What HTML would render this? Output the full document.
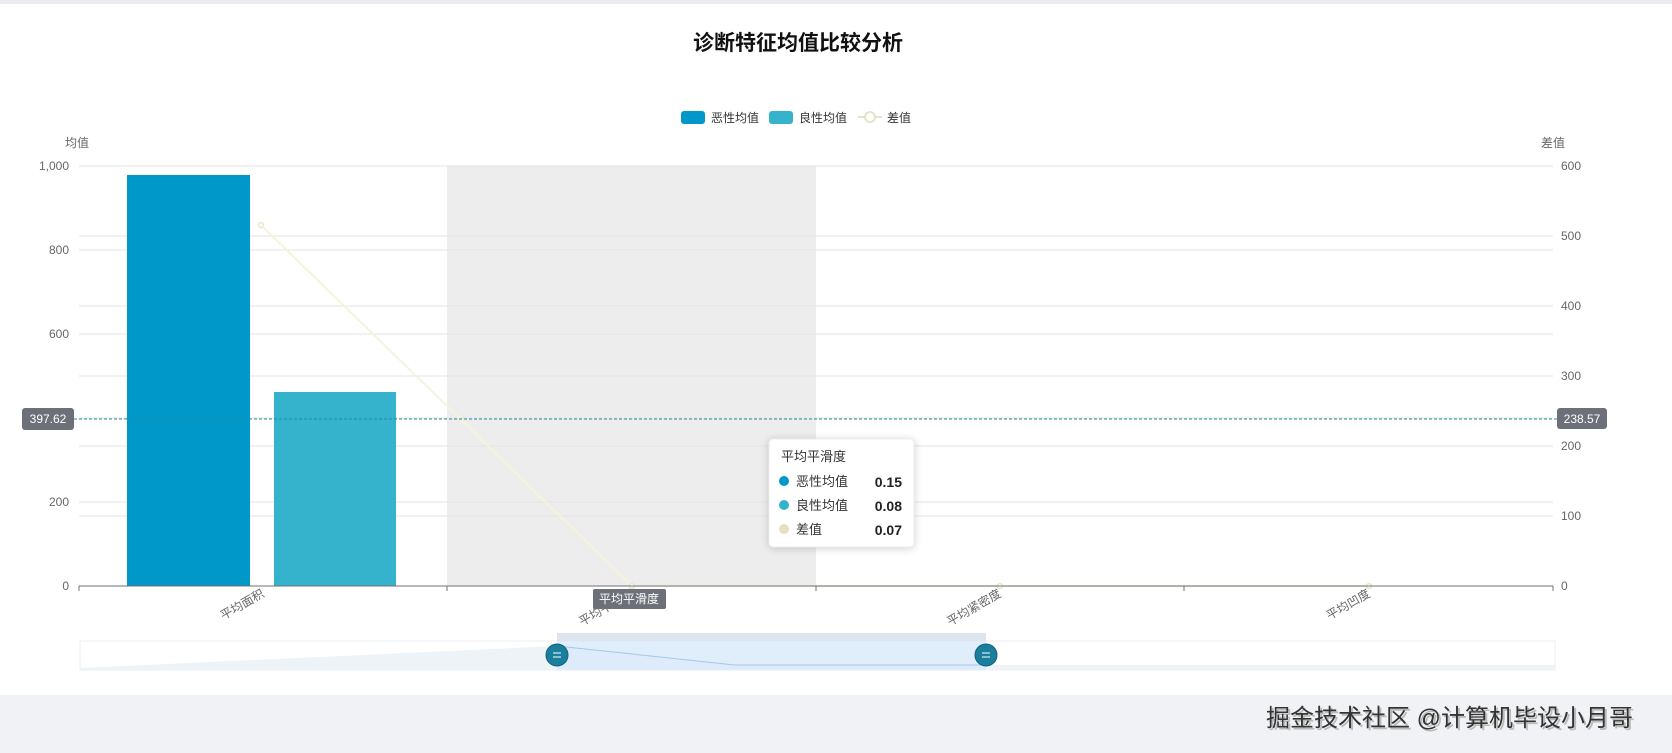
<!DOCTYPE html>
<html><head><meta charset="utf-8"><style>
html,body{margin:0;padding:0;width:1672px;height:753px;overflow:hidden;background:#f0f2f5;font-family:"Liberation Sans","Noto Sans CJK SC",sans-serif}
</style></head><body>
<svg width="1672" height="753" xmlns="http://www.w3.org/2000/svg" style="position:absolute;left:0;top:0" font-family="Liberation Sans, Noto Sans CJK SC, sans-serif">
<rect x="0" y="0" width="1672" height="4" fill="#e9ebee"/>
<rect x="0" y="4" width="1672" height="691" fill="#fff"/>
<rect x="0" y="695" width="1672" height="58" fill="#f0f2f5"/>
<text x="798" y="50" text-anchor="middle" font-size="21" font-weight="bold" fill="#111">诊断特征均值比较分析</text>
<rect x="681" y="111" width="24" height="13" rx="3" fill="#0098c8"/>
<text x="711" y="122" font-size="12" fill="#333">恶性均值</text>
<rect x="769" y="111" width="24" height="13" rx="3" fill="#35b2cc"/>
<text x="799" y="122" font-size="12" fill="#333">良性均值</text>
<line x1="858" y1="117" x2="882" y2="117" stroke="#e6e3c8" stroke-width="2"/>
<circle cx="870" cy="117" r="5" fill="#fff" stroke="#e6e3c8" stroke-width="2"/>
<text x="887" y="122" font-size="12" fill="#333">差值</text>
<text x="77" y="147" text-anchor="middle" font-size="12" fill="#666">均值</text>
<text x="1553" y="147" text-anchor="middle" font-size="12" fill="#666">差值</text>
<rect x="447" y="166" width="369" height="420" fill="#ededed"/>
<g stroke="#e3e3e3" stroke-width="1">
<line x1="79" y1="166" x2="1553" y2="166"/><line x1="79" y1="250" x2="1553" y2="250"/><line x1="79" y1="334" x2="1553" y2="334"/><line x1="79" y1="418" x2="1553" y2="418"/><line x1="79" y1="502" x2="1553" y2="502"/>
<line x1="79" y1="236" x2="1553" y2="236"/><line x1="79" y1="306" x2="1553" y2="306"/><line x1="79" y1="376" x2="1553" y2="376"/><line x1="79" y1="446" x2="1553" y2="446"/><line x1="79" y1="516" x2="1553" y2="516"/>
</g>
<g font-size="12" fill="#666" text-anchor="end">
<text x="69" y="170">1,000</text><text x="69" y="254">800</text><text x="69" y="338">600</text><text x="69" y="506">200</text><text x="69" y="590">0</text>
</g>
<g font-size="12" fill="#666">
<text x="1561" y="170">600</text><text x="1561" y="240">500</text><text x="1561" y="310">400</text><text x="1561" y="380">300</text><text x="1561" y="450">200</text><text x="1561" y="520">100</text><text x="1561" y="590">0</text>
</g>
<rect x="127" y="175" width="123" height="411" fill="#0098c8"/>
<rect x="274" y="392" width="122" height="194" fill="#35b2cc"/>
<polyline points="261,225 632,586 1000,586 1369,586" fill="none" stroke="#f6f3dc" stroke-width="2"/>
<g fill="#fff" stroke="#e9e6cc" stroke-width="1.5"><circle cx="261" cy="225" r="2.5"/><circle cx="632" cy="586" r="2.5"/><circle cx="1000" cy="586" r="2.5"/><circle cx="1369" cy="586" r="2.5"/></g>
<line x1="79" y1="586" x2="1553" y2="586" stroke="#6e7079"/>
<g stroke="#6e7079"><line x1="79" y1="586" x2="79" y2="591"/><line x1="447" y1="586" x2="447" y2="591"/><line x1="816" y1="586" x2="816" y2="591"/><line x1="1184" y1="586" x2="1184" y2="591"/><line x1="1553" y1="586" x2="1553" y2="591"/></g>
<g font-size="12" fill="#666" text-anchor="end">
<text transform="translate(265,596) rotate(-30)">平均面积</text>
<text transform="translate(634,596) rotate(-30)">平均平滑度</text>
<text transform="translate(1002,596) rotate(-30)">平均紧密度</text>
<text transform="translate(1371,596) rotate(-30)">平均凹度</text>
</g>
<rect x="593" y="589" width="73" height="20" rx="2" fill="#6e7079"/>
<text x="629" y="603" text-anchor="middle" font-size="12" fill="#fff">平均平滑度</text>
<line x1="74" y1="419" x2="1557" y2="419" stroke="#1f8ea0" stroke-dasharray="3,2"/>
<rect x="22" y="408" width="52" height="22" rx="3" fill="#6e7079"/>
<text x="48" y="423" text-anchor="middle" font-size="12" fill="#fff">397.62</text>
<rect x="1557" y="408" width="50" height="21" rx="3" fill="#6e7079"/>
<text x="1582" y="423" text-anchor="middle" font-size="12" fill="#fff">238.57</text>
<rect x="769" y="439" width="145" height="108" rx="4" fill="#fff" stroke="#eee" style="filter:drop-shadow(0 1px 4px rgba(0,0,0,.18))"/>
<text x="781" y="461" font-size="13" fill="#333">平均平滑度</text>
<circle cx="784" cy="481" r="5" fill="#0098c8"/><text x="796" y="486" font-size="13" fill="#333">恶性均值</text><text x="902" y="487" text-anchor="end" font-size="14" font-weight="bold" fill="#222">0.15</text>
<circle cx="784" cy="505" r="5" fill="#35b2cc"/><text x="796" y="510" font-size="13" fill="#333">良性均值</text><text x="902" y="511" text-anchor="end" font-size="14" font-weight="bold" fill="#222">0.08</text>
<circle cx="784" cy="529" r="5" fill="#e8dfc0"/><text x="796" y="534" font-size="13" fill="#333">差值</text><text x="902" y="535" text-anchor="end" font-size="14" font-weight="bold" fill="#222">0.07</text>
<rect x="80" y="641" width="1475" height="29" fill="#fff" stroke="#e8ecf2"/>
<path d="M80,668 L557,646 L735,665 L1555,665 L1555,670 L80,670Z" fill="#eef3f8"/>
<rect x="557" y="641" width="429" height="29" fill="#d8e8fa" opacity="0.8"/>
<path d="M557,646 L735,665 L986,665" fill="none" stroke="#a9c6e6"/>
<rect x="557" y="633" width="429" height="8" fill="#dfe5ef"/>
<g fill="#1a7f9c" stroke="#0f6080"><circle cx="557" cy="655" r="11"/><circle cx="986" cy="655" r="11"/></g>
<g stroke="#fff" stroke-width="1"><line x1="553" y1="653" x2="561" y2="653"/><line x1="553" y1="657" x2="561" y2="657"/><line x1="982" y1="653" x2="990" y2="653"/><line x1="982" y1="657" x2="990" y2="657"/></g>
<text x="1268" y="728" font-size="24" fill="#bbb">掘金技术社区 @计算机毕设小月哥</text>
<text x="1266" y="726" font-size="24" fill="#333">掘金技术社区 @计算机毕设小月哥</text>
</svg>
</body></html>
